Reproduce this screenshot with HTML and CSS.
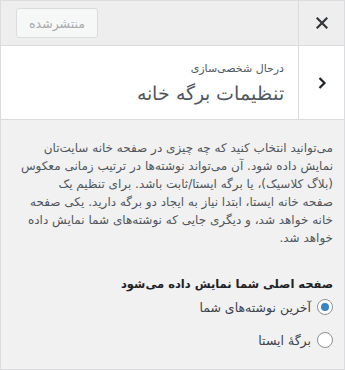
FILE: index.html
```html
<!DOCTYPE html>
<html lang="fa" dir="rtl">
<head>
<meta charset="utf-8">
<link rel="stylesheet" href="styles.css">
</head>
<body>
<div class="panel">
  <div class="topbar">
    <button class="close" aria-label="بستن">
      <svg width="12" height="12" viewBox="0 0 12 12"><path d="M1.5 1.5L10.5 10.5M10.5 1.5L1.5 10.5" stroke="#32373c" stroke-width="2.2" stroke-linecap="square"/></svg>
    </button>
    <button class="publish">منتشرشده</button>
  </div>
  <div class="section-head">
    <button class="back" aria-label="بازگشت">
      <svg width="10" height="14" viewBox="0 0 10 14"><path d="M2.5 2L7.5 7L2.5 12" fill="none" stroke="#1d2327" stroke-width="2.2"/></svg>
    </button>
    <div class="titles">
      <div class="sub">درحال شخصی‌سازی</div>
      <div class="title">تنظیمات برگه خانه</div>
    </div>
  </div>
  <div class="body">
    <p class="desc">می‌توانید انتخاب کنید که چه چیزی در صفحه خانه سایت‌تان<br>نمایش داده شود. آن می‌تواند نوشته‌ها در ترتیب زمانی معکوس<br>(بلاگ کلاسیک)، یا برگه ایستا/ثابت باشد. برای تنظیم یک<br>صفحه خانه ایستا، ابتدا نیاز به ایجاد دو برگه دارید. یکی صفحه<br>خانه خواهد شد، و دیگری جایی که نوشته‌های شما نمایش داده<br>خواهد شد.</p>
    <div class="group-title">صفحه اصلی شما نمایش داده می‌شود</div>
    <label class="radio"><span class="dot checked"></span><span>آخرین نوشته‌های شما</span></label>
    <label class="radio"><span class="dot"></span><span>برگهٔ ایستا</span></label>
  </div>
</div>
</body>
</html>
```
FILE: styles.css
```css
* { box-sizing: border-box; }
html, body { margin: 0; padding: 0; height: 100%; }
body {
  font-family: "DejaVu Sans", "Noto Sans", sans-serif;
  background: #f1f1f1;
}
.panel {
  height: 370px;
  border: 1px solid #dcdcde;
  background: #f1f1f1;
  display: flex;
  flex-direction: column;
}
.topbar {
  height: 45px;
  background: #eeeeee;
  border-bottom: 1px solid #dcdcde;
  display: flex;
  align-items: center;
  flex-shrink: 0;
}
.close {
  width: 46px;
  height: 44px;
  border: 0;
  border-left: 1px solid #dcdcde;
  background: transparent;
  display: flex;
  align-items: center;
  justify-content: center;
  padding: 0;
}
.publish {
  margin-right: auto;
  margin-left: 15px;
  width: 82px;
  height: 30px;
  border: 1px solid #dcdcde;
  border-radius: 3px;
  background: #f6f7f7;
  color: #a7aaad;
  font-family: inherit;
  font-size: 12.5px;
  padding: 0;
}
.section-head {
  height: 74px;
  background: #fff;
  border-bottom: 1px solid #dcdcde;
  display: flex;
  flex-shrink: 0;
}
.back {
  width: 46px;
  border: 0;
  border-left: 1px solid #dcdcde;
  background: transparent;
  display: flex;
  align-items: center;
  justify-content: center;
  padding: 0;
}
.titles {
  padding: 15px 14px 0 14px;
}
.sub {
  font-size: 11px;
  color: #50575e;
  line-height: 16px;
}
.title {
  font-size: 19px;
  font-weight: 300;
  color: #50575e;
  line-height: 26px;
  margin-top: 3px;
}
.body {
  padding: 19px 11px 0 8px;
}
.desc {
  margin: 0;
  font-size: 12px;
  line-height: 18px;
  color: #50575e;
  white-space: nowrap;
}
.group-title {
  margin-top: 27px;
  font-size: 11.5px;
  font-weight: bold;
  color: #1d2327;
  line-height: 20px;
}
.radio {
  display: flex;
  align-items: center;
  gap: 6px;
  font-size: 12.5px;
  color: #3c434a;
  margin-top: 1px;
  height: 24px;
}
.radio + .radio { margin-top: 9px; }
.dot {
  width: 16px;
  height: 16px;
  border: 1px solid #8c8f94;
  border-radius: 50%;
  background: #fff;
  display: flex;
  align-items: center;
  justify-content: center;
}
.dot.checked::after {
  content: "";
  width: 8px;
  height: 8px;
  border-radius: 50%;
  background: #3582c4;
}
```
